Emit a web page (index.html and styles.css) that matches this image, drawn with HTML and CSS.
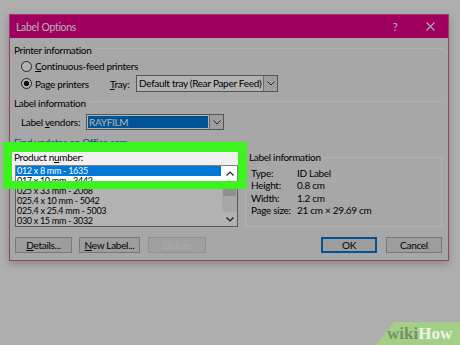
FILE: index.html
```html
<!DOCTYPE html>
<html lang="en">
<head>
    <meta charset="UTF-8">
    <meta name="viewport" content="width=device-width, initial-scale=1.0">
    <title>Label Options</title>
    <link rel="stylesheet" href="styles.css">
</head>
<body>
<div class="screen">
    <div class="dialog">
        <div class="titlebar">
            <span class="title">Label Options</span>
            <span class="tb-help">?</span>
            <span class="tb-close">
                <svg width="9" height="9" viewBox="0 0 9 9"><path d="M0.5 0.5 L8.5 8.5 M8.5 0.5 L0.5 8.5" stroke="#fff" stroke-width="1.1"/></svg>
            </span>
        </div>

        <div class="dialog-body">
            <!-- printer -->
            <div class="group-head"><span>Printer information</span></div>
            <div class="radio-row">
                <span class="radio"></span>
                <span><u>C</u>ontinuous-feed printers</span>
            </div>
            <div class="radio-row tall">
                <span class="radio checked"></span>
                <span class="page-label">Pa<u>g</u>e printers</span>
                <span class="tray-label"><u>T</u>ray:</span>
                <div class="select tray-select">
                    <span class="select-text">Default tray (Rear Paper Feed)</span>
                    <span class="select-btn"><svg width="8" height="5" viewBox="0 0 8 5"><path d="M0.5 0.5 L4 4 L7.5 0.5" fill="none" stroke="#333"/></svg></span>
                </div>
            </div>

            <!-- label -->
            <div class="group-head"><span>Label information</span></div>
            <div class="vendor-row">
                <span class="vendor-label">Label <u>v</u>endors:</span>
                <div class="select vendor-select">
                    <span class="select-text"><span class="picked">RAYFILM</span></span>
                    <span class="select-btn"><svg width="8" height="5" viewBox="0 0 8 5"><path d="M0.5 0.5 L4 4 L7.5 0.5" fill="none" stroke="#333"/></svg></span>
                </div>
            </div>
            <div class="link-row"><a class="link">Find updates on Office.com</a></div>

            <div class="lower">
                <div class="product">
                    <div class="product-label">Product n<u>u</u>mber:</div>
                    <div class="listbox">
                        <ul class="items">
                            <li class="selected">012 x 8 mm - 1635</li>
                            <li>017 x 10 mm - 3442</li>
                            <li>025 x 33 mm - 2068</li>
                            <li>025.4 x 10 mm - 5042</li>
                            <li>025.4 x 25.4 mm - 5003</li>
                            <li>030 x 15 mm - 3032</li>
                        </ul>
                        <div class="scrollbar">
                            <span class="sb-btn"><svg width="8" height="5" viewBox="0 0 8 5"><path d="M0.5 4.5 L4 1 L7.5 4.5" fill="none" stroke="#222" stroke-width="1.2"/></svg></span>
                            <span class="sb-thumb"></span>
                            <span class="sb-track"></span>
                            <span class="sb-btn"><svg width="8" height="5" viewBox="0 0 8 5"><path d="M0.5 0.5 L4 4 L7.5 0.5" fill="none" stroke="#222" stroke-width="1.2"/></svg></span>
                        </div>
                    </div>
                </div>

                <fieldset class="info">
                    <legend>Label information</legend>
                    <div class="info-grid">
                        <span>Type:</span><span>ID Label</span>
                        <span>Height:</span><span>0.8 cm</span>
                        <span>Width:</span><span>1.2 cm</span>
                        <span>Page size:</span><span>21 cm × 29.69 cm</span>
                    </div>
                </fieldset>
            </div>

            <div class="buttons">
                <div class="btn-group">
                    <button class="btn w-details"><u>D</u>etails...</button>
                    <button class="btn w-new"><u>N</u>ew Label...</button>
                    <button class="btn w-delete" disabled>Delete</button>
                </div>
                <div class="btn-group right">
                    <button class="btn w-ok primary">OK</button>
                    <button class="btn w-cancel">Cancel</button>
                </div>
            </div>
        </div>
    </div>

    <!-- green highlight, dims the rest of the picture -->
    <div class="spotlight"></div>

    <div class="wikihow"><span class="wiki">wiki</span><span class="how">How</span></div>
</div>
</body>
</html>
```

FILE: styles.css
```css
* { box-sizing: border-box; }

body {
    margin: 0;
    font-family: "Lato", "Noto Sans", sans-serif;
    font-size: 10px;
    letter-spacing: -0.3px;
    color: #000;
}

.screen {
    position: relative;
    width: 460px;
    height: 345px;
    overflow: hidden;
    background: #f9f9f9;
    padding: 14px 0 0 9px;
}

.dialog {
    width: 440px;
    border: 1px solid #dc5aa2;
    background: #f0f0f0;
    box-shadow: 0 3px 8px rgba(0, 0, 0, 0.22);
}

.titlebar {
    height: 23px;
    display: flex;
    align-items: center;
    padding-left: 6px;
    background: #e4008a;
    color: #fff;
    font-size: 10.5px;
    letter-spacing: -0.3px;
}
.title { flex: 1; }
.tb-help {
    width: 34px;
    text-align: center;
    font-size: 11px;
}
.tb-close {
    width: 36px;
    display: flex;
    justify-content: center;
}

.dialog-body {
    padding: 0 5px 7px 4px;
}

.group-head {
    height: 12px;
    line-height: 12px;
    margin-top: 5px;
    display: flex;
    gap: 4px;
}
.group-head:first-child { margin-top: 6px; }
.group-head::after {
    content: "";
    flex: 1;
    height: 1px;
    margin-top: 4px;
    background: #fff;
}

.radio-row {
    height: 12px;
    margin-top: 4px;
    padding-left: 7px;
    display: flex;
    align-items: center;
}
.radio-row.tall {
    height: 17px;
    margin-top: 3px;
}
.radio {
    width: 11px;
    height: 11px;
    margin-right: 3px;
    border: 1px solid #333;
    border-radius: 50%;
    background: #fff;
}
.radio.checked {
    background: radial-gradient(circle, #1a1a1a 2.4px, #fff 3px);
}
.page-label { width: 75px; }
.tray-label { width: 26px; }

.select {
    display: flex;
    border: 1px solid #7a7a7a;
    background: #fff;
}
.select-text {
    flex: 1;
    padding: 1px 2px;
    white-space: nowrap;
    overflow: hidden;
}
.select-btn {
    width: 14px;
    display: flex;
    align-items: center;
    justify-content: center;
    border-left: 1px solid #9a9a9a;
    background: #e3e3e3;
}
.tray-select {
    width: 142px;
    height: 17px;
    line-height: 13px;
}

.vendor-row {
    height: 16px;
    margin-top: 5px;
    padding-left: 7px;
    display: flex;
    align-items: center;
}
.vendor-label { width: 65px; }
.vendor-select {
    width: 138px;
    height: 16px;
}
.vendor-select .select-text {
    padding: 1px 1px;
    display: flex;
}
.picked {
    flex: 1;
    padding-left: 1px;
    line-height: 12px;
    background: #0078d7;
    color: #fff;
}

.link-row {
    height: 12px;
    line-height: 12px;
    margin-top: 6px;
}
.link { color: #0b6aa8; }

.lower {
    display: flex;
    gap: 7px;
    margin-top: 3px;
}
.product { width: 224px; }
.product-label {
    height: 12px;
    line-height: 12px;
}
.listbox {
    height: 62px;
    margin: 2px 0 0 1px;
    display: flex;
    border: 1px solid #828282;
    background: #fff;
}
.items {
    flex: 1;
    margin: 0;
    padding: 0;
    list-style: none;
    font-size: 9px;
}
.items li {
    height: 10px;
    line-height: 10px;
    padding-left: 1px;
    margin-right: 1px;
    white-space: nowrap;
}
.items li.selected {
    background: #0078d7;
    color: #fff;
}
.scrollbar {
    width: 15px;
    display: flex;
    flex-direction: column;
    background: #f0f0f0;
}
.sb-btn {
    height: 14px;
    display: flex;
    align-items: center;
    justify-content: center;
    background: #fff;
}
.sb-thumb {
    height: 15px;
    margin: 1px 1px 0;
    background: #cdcdcd;
}
.sb-track { flex: 1; }

.info {
    width: 197px;
    height: 76px;
    margin: 0 1px 0 0;
    padding: 3px 0 0 5px;
    border: 1px solid #fff;
}
.info legend {
    padding: 0 1px;
    margin-left: -3px;
    line-height: 12px;
}
.info-grid {
    display: grid;
    grid-template-columns: 46px auto;
    grid-auto-rows: 12.3px;
    line-height: 12px;
    padding-top: 1px;
    white-space: nowrap;
}

.buttons {
    display: flex;
    justify-content: space-between;
    margin-top: 10px;
}
.btn-group {
    display: flex;
    gap: 7px;
    margin-left: 1px;
}
.btn-group.right {
    gap: 9px;
    margin: 0 1px 0 0;
}
.btn {
    height: 16px;
    padding: 0;
    font: inherit;
    letter-spacing: inherit;
    line-height: 14px;
    color: #000;
    background: #e1e1e1;
    border: 1px solid #adadad;
}
.btn.primary { border: 2px solid #0078d7; line-height: 12px; }
.btn:disabled {
    color: #f5f5f5;
    background: #e6e6e6;
    border-color: #d0d0d0;
}
.w-details { width: 57px; }
.w-new { width: 61px; margin-right: 1px; }
.w-delete { width: 58px; }
.w-ok { width: 56px; }
.w-cancel { width: 56px; }

.spotlight {
    position: absolute;
    left: 3px;
    top: 142px;
    width: 244px;
    height: 47px;
    border: 9px solid #3cf21f;
    border-top-width: 10px;
    border-bottom-width: 8px;
    box-shadow: 0 0 0 600px rgba(0, 0, 0, 0.3);
}

.wikihow {
    position: absolute;
    right: 0;
    bottom: 0;
    width: 84px;
    height: 23px;
    padding: 2px 0 0 11px;
    background: #a3cf86;
    clip-path: polygon(18px 0, 100% 0, 100% 100%, 0 100%);
    font-family: "Liberation Serif", serif;
    font-weight: bold;
    font-size: 17px;
    line-height: 20px;
    letter-spacing: 0;
}
.wiki { color: #778f68; }
.how { color: #eef4ea; }
```
